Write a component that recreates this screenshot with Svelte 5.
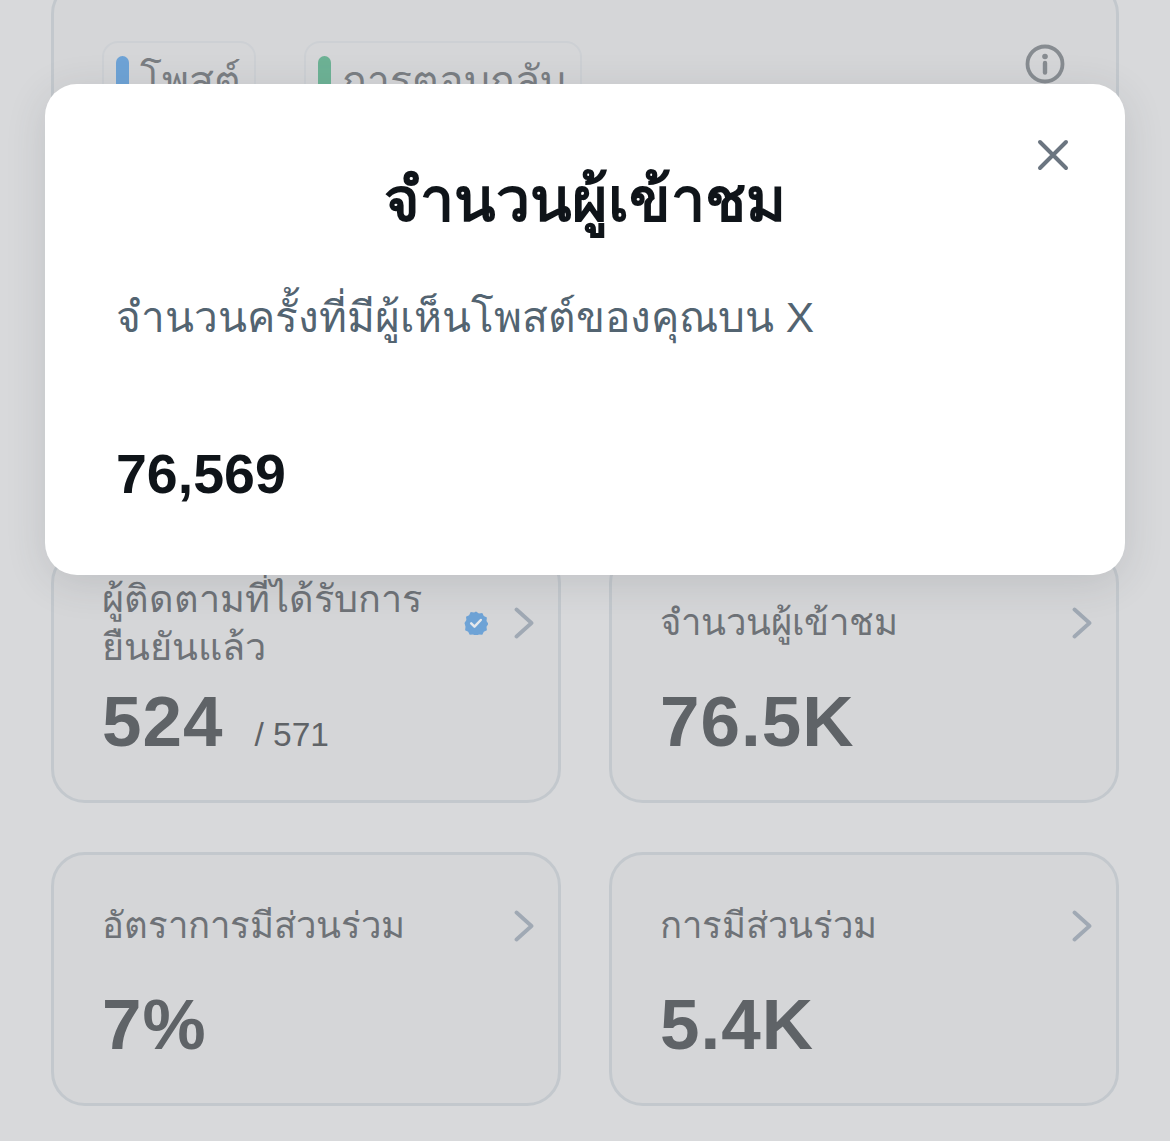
<script>
  const cards = [
    { label: 'ผู้ติดตามที่ได้รับการยืนยันแล้ว', value: '524', total: '/ 571', verified: true },
    { label: 'จำนวนผู้เข้าชม', value: '76.5K' },
    { label: 'อัตราการมีส่วนร่วม', value: '7%' },
    { label: 'การมีส่วนร่วม', value: '5.4K' }
  ];
</script>

<div class="page">
  <section class="chart-card">
    <div class="legend">
      <div class="chip"><span class="bar blue"></span><span>โพสต์</span></div>
      <div class="chip wide"><span class="bar green"></span><span>การตอบกลับ</span></div>
    </div>
    <svg class="info" viewBox="0 0 40 40" width="40" height="40" aria-hidden="true">
      <circle cx="20" cy="20" r="17.500" fill="none" stroke="#878c91" stroke-width="3.800" />
      <circle cx="20" cy="12.500" r="2.800" fill="#878c91" />
      <path d="M20 19v9.500" stroke="#878c91" stroke-width="4.400" stroke-linecap="round" />
    </svg>
  </section>

  <div class="grid">
    {#each cards as card}
      <article class="card">
        <div class="head">
          <div class="label" class:narrow={card.verified}>{card.label}</div>
          {#if card.verified}
            <svg class="badge" viewBox="0 0 24 24" width="24" height="24" aria-hidden="true">
              <path fill="#6ea3d6" d="M12 0.500l2.900 1.900 3.400-.4 1.500 3.100 3.100 1.500-.4 3.400 1.900 2.900-1.900 2.900.4 3.400-3.100 1.500-1.500 3.100-3.400-.4-2.900 1.900-2.900-1.900-3.400.4-1.500-3.100-3.100-1.500.4-3.400L.5 12l1.900-2.900-.4-3.400 3.100-1.500L6.700 1.100l3.400.4z" />
              <path d="M7.200 12.300l3.300 3.300 6.300-6.600" fill="none" stroke="#e4e8ec" stroke-width="2.500" stroke-linecap="round" stroke-linejoin="round" />
            </svg>
          {/if}
          <svg class="chev" viewBox="0 0 20 32" width="20" height="32" aria-hidden="true">
            <path d="M2.500 2.500L17.500 16L2.500 29.500" fill="none" stroke="#a0a9b4" stroke-width="3.800" stroke-linecap="round" stroke-linejoin="round" />
          </svg>
        </div>
        <div class="value-row">
          <span class="value">{card.value}</span>
          {#if card.total}<span class="total">{card.total}</span>{/if}
        </div>
      </article>
    {/each}
  </div>
</div>

<div class="modal" role="dialog">
  <svg class="close" viewBox="0 0 32 32" width="32" height="32" aria-hidden="true">
    <path d="M3 3L29 29M29 3L3 29" stroke="#6b7580" stroke-width="4" stroke-linecap="round" />
  </svg>
  <h2>จำนวนผู้เข้าชม</h2>
  <p>จำนวนครั้งที่มีผู้เห็นโพสต์ของคุณบน X</p>
  <div class="count">76,569</div>
</div>

<style>
  :global(body) {
    margin: 0;
    background: #d8d9db;
    font-family: "Liberation Sans", "Noto Sans", "DejaVu Sans", sans-serif;
  }
  .page {
    position: relative;
    width: 1170px;
    height: 1141px;
    overflow: hidden;
    box-sizing: border-box;
    padding: 0 51px;
    background: #d8d9db;
  }
  .chart-card {
    box-sizing: border-box;
    height: 520px;
    margin-top: -20px;
    border: 3px solid #c3c8cd;
    border-radius: 34px;
    background: #d5d6d8;
    padding: 58px 51px 0 48px;
    display: flex;
    justify-content: space-between;
    align-items: flex-start;
    margin-bottom: 49px;
  }
  .legend { display: flex; gap: 48px; }
  .chip {
    display: flex;
    gap: 11px;
    align-items: flex-start;
    height: 90px;
    width: 154px;
    box-sizing: border-box;
    padding: 13px 12px;
    border: 2px solid #cdd0d4;
    border-radius: 16px;
    font-size: 41px;
    line-height: 51px;
    color: #7a7e83;
    white-space: nowrap;
  }
  .chip.wide { width: 278px; }
  .bar { flex: none; width: 13px; height: 60px; border-radius: 7px; }
  .blue { background: #6ea3d6; }
  .green { background: #6db295; }
  .info { margin: 3px 0 0 0; }
  .grid {
    display: grid;
    grid-template-columns: 510px 510px;
    column-gap: 48px;
    row-gap: 49px;
  }
  .card {
    box-sizing: border-box;
    height: 254px;
    border: 3px solid #c3c8cd;
    border-radius: 34px;
    background: #d5d6d8;
    padding: 25px 24px 0 48px;
  }
  .head {
    height: 92px;
    display: flex;
    align-items: center;
    color: #6e7277;
  }
  .label { flex: 1; font-size: 36.500px; line-height: 48px; }
  .label.narrow { flex: none; width: 352px; margin-right: 10px; font-size: 37.800px; }
  .badge { flex: none; margin-right: 26px; }
  .chev { flex: none; margin-left: auto; }
  .value-row {
    display: flex;
    align-items: baseline;
    margin-top: 13px;
    color: #5f6367;
  }
  .value { font-size: 71px; font-weight: 700; line-height: 80px; letter-spacing: 1px; }
  .total { font-size: 33.500px; margin-left: 31px; }
  .modal {
    position: absolute;
    left: 45px;
    top: 84px;
    width: 1080px;
    height: 491px;
    box-sizing: border-box;
    padding: 78px 71px 0;
    background: #fff;
    border-radius: 32px;
    box-shadow: 0 8px 40px rgba(60, 64, 70, 0.14);
    color: #0f1419;
  }
  .close { position: absolute; right: 56px; top: 55px; }
  h2 {
    margin: 0;
    text-align: center;
    font-size: 60.800px;
    line-height: 76px;
    font-weight: 700;
  }
  p {
    margin: 54px 0 0;
    font-size: 42.400px;
    line-height: 52px;
    color: #536471;
  }
  .count {
    margin-top: 100px;
    font-size: 55.500px;
    line-height: 60px;
    font-weight: 700;
  }
</style>
